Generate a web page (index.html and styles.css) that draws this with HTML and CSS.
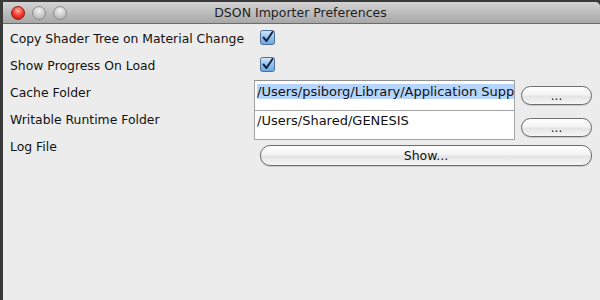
FILE: index.html
```html
<!DOCTYPE html>
<html lang="en">
<head>
    <meta charset="UTF-8">
    <title>DSON Importer Preferences</title>
    <link rel="stylesheet" href="styles.css">
</head>
<body>
    <div class="window">
        <div class="titlebar">
            <div class="lights">
                <span class="light close"></span>
                <span class="light"></span>
                <span class="light"></span>
            </div>
            <div class="title">DSON Importer Preferences</div>
        </div>
        <div class="content">
            <div class="labels">
                <div class="label">Copy Shader Tree on Material Change</div>
                <div class="label">Show Progress On Load</div>
                <div class="label">Cache Folder</div>
                <div class="label">Writable Runtime Folder</div>
                <div class="label">Log File</div>
            </div>
            <div class="controls">
                <div class="check-row">
                    <svg class="check" width="15" height="15" viewBox="0 0 15 15">
                        <defs>
                            <linearGradient id="cb" x1="0" y1="0" x2="0" y2="1">
                                <stop offset="0" stop-color="#d6e9fb"/>
                                <stop offset="0.5" stop-color="#93c2ef"/>
                                <stop offset="1" stop-color="#6aa6e2"/>
                            </linearGradient>
                        </defs>
                        <rect x="0.5" y="0.5" width="14" height="14" rx="2" fill="url(#cb)" stroke="#4f6f96"/>
                        <path d="M3.5 7.5 L6.5 11 L12.5 2" fill="none" stroke="#142640" stroke-width="2" stroke-linecap="round" stroke-linejoin="round"/>
                    </svg>
                </div>
                <div class="check-row">
                    <svg class="check" width="15" height="15" viewBox="0 0 15 15">
                        <rect x="0.5" y="0.5" width="14" height="14" rx="2" fill="url(#cb)" stroke="#4f6f96"/>
                        <path d="M3.5 7.5 L6.5 11 L12.5 2" fill="none" stroke="#142640" stroke-width="2" stroke-linecap="round" stroke-linejoin="round"/>
                    </svg>
                </div>
                <div class="field-row first">
                    <div class="field"><span class="selected">/Users/psiborg/Library/Application Supp</span></div>
                    <button class="pill small">...</button>
                </div>
                <div class="field-row second">
                    <div class="field">/Users/Shared/GENESIS</div>
                    <button class="pill small">...</button>
                </div>
                <button class="pill show">Show...</button>
            </div>
        </div>
    </div>
</body>
</html>
```

FILE: styles.css
```css
body {
    margin: 0;
    background-color: #3a3a3a;
    font-family: "DejaVu Sans", Verdana, sans-serif;
    font-size: 12.4px;
    color: #111;
    height: 300px;
    overflow: hidden;
}
.window {
    margin: 2px 0 0 3px;
    height: 298px;
    background-color: #ececec;
    border-top-right-radius: 5px;
    overflow: hidden;
}
.titlebar {
    position: relative;
    height: 21px;
    background: linear-gradient(#d4d4d4, #bdbdbd 50%, #a7a7a7);
    border-bottom: 1px solid #6b6b6b;
    display: flex;
    align-items: center;
    justify-content: center;
}
.lights {
    position: absolute;
    left: 8px;
    top: 4px;
    display: flex;
    gap: 7px;
}
.light {
    width: 12px;
    height: 12px;
    border-radius: 50%;
    border: 1px solid #8e8e8e;
    background: radial-gradient(circle at 50% 30%, #f2f2f2, #c9c9c9 55%, #a9a9a9);
}
.light.close {
    border-color: #8e1d17;
    background: radial-gradient(circle at 50% 30%, #ffb0a6, #f23b2d 50%, #b7130b);
}
.title {
    font-size: 12.5px;
    color: #1e1e1e;
    margin-left: -2px;
}
.content {
    display: flex;
}
.labels {
    width: 244px;
    padding: 1px 0 0 7px;
}
.label {
    height: 27px;
    line-height: 27px;
    white-space: nowrap;
}
.controls {
    display: flex;
    flex-direction: column;
    width: 338px;
}
.check-row {
    height: 27px;
    display: flex;
    align-items: center;
    padding-left: 6px;
}
.field-row {
    display: flex;
    align-items: flex-start;
}
.field-row.first {
    margin-top: 2px;
}
.field {
    width: 255px;
    height: 26px;
    padding: 3px 2px 0 2px;
    background-color: #fff;
    border: 1px solid #a4a4a4;
    border-top-color: #8e8e8e;
    white-space: nowrap;
    overflow: hidden;
    line-height: 16px;
    font-size: 13px;
}
.field-row.second .field {
    border-top: none;
    height: 26px;
    padding-top: 2px;
}
.selected {
    background-color: #b5d5fd;
}
.pill {
    font-family: inherit;
    font-size: 12px;
    color: #111;
    border: 1px solid #6c6c6c;
    border-radius: 10px;
    background: linear-gradient(#ffffff, #f3f3f3 45%, #e4e4e4 55%, #f6f6f6);
    box-shadow: 0 1px 1px rgba(0, 0, 0, 0.15);
    padding: 0;
}
.pill.small {
    width: 71px;
    height: 19px;
    margin: 6px 0 0 6px;
    line-height: 14px;
}
.field-row.second .pill.small {
    margin-top: 7px;
}
.pill.show {
    width: 332px;
    height: 21px;
    margin: 5px 0 0 6px;
    font-size: 12.5px;
}
```
